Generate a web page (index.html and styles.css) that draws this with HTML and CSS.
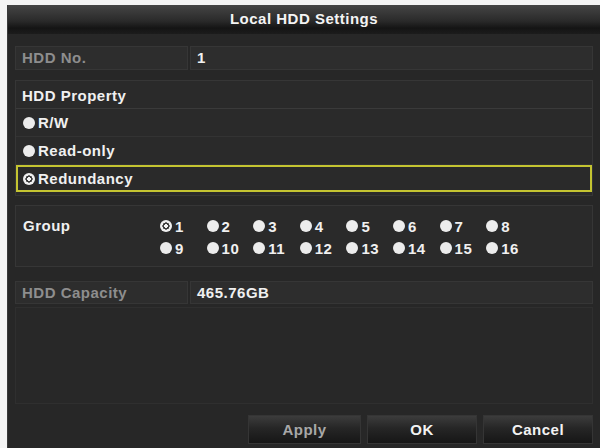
FILE: index.html
```html
<!DOCTYPE html>
<html lang="en">
<head>
	<meta charset="UTF-8">
	<title>Local HDD Settings</title>
	<link rel="stylesheet" href="styles.css">
</head>
<body>
	<div id="dialog">
		<div class="title">Local HDD Settings</div>
		<div class="content">
			<div class="field">
				<div class="label dim">HDD No.</div>
				<div class="value">1</div>
			</div>

			<div class="panel prop">
				<div class="prop-head">HDD Property</div>
				<div class="prop-row"><span class="dot"></span>R/W</div>
				<div class="prop-row"><span class="dot"></span>Read-only</div>
				<div class="prop-row active"><span class="dot on"></span>Redundancy</div>
			</div>

			<div class="panel group">
				<div class="group-label">Group</div>
				<div class="group-list">
					<span class="opt"><span class="dot on"></span>1</span>
					<span class="opt"><span class="dot"></span>2</span>
					<span class="opt"><span class="dot"></span>3</span>
					<span class="opt"><span class="dot"></span>4</span>
					<span class="opt"><span class="dot"></span>5</span>
					<span class="opt"><span class="dot"></span>6</span>
					<span class="opt"><span class="dot"></span>7</span>
					<span class="opt"><span class="dot"></span>8</span>
					<span class="opt"><span class="dot"></span>9</span>
					<span class="opt"><span class="dot"></span>10</span>
					<span class="opt"><span class="dot"></span>11</span>
					<span class="opt"><span class="dot"></span>12</span>
					<span class="opt"><span class="dot"></span>13</span>
					<span class="opt"><span class="dot"></span>14</span>
					<span class="opt"><span class="dot"></span>15</span>
					<span class="opt"><span class="dot"></span>16</span>
				</div>
			</div>

			<div class="field cap">
				<div class="label dim">HDD Capacity</div>
				<div class="value">465.76GB</div>
			</div>

			<div class="panel empty"></div>

			<div class="buttons">
				<div class="btn apply">Apply</div>
				<div class="btn">OK</div>
				<div class="btn">Cancel</div>
			</div>
		</div>
	</div>
</body>
</html>
```

FILE: styles.css
```css
*{
	margin: 0;
	padding: 0;
	box-sizing: border-box;
}
body{
	background: #f4f4f4;
	font-family: "Liberation Sans", Arial, sans-serif;
	font-weight: bold;
	font-size: 15px;
	letter-spacing: 0.5px;
	color: #f0f0f0;
}
#dialog{
	width: 593px;
	height: 443px;
	margin: 5px 0 0 7px;
	background: #272727;
	border-left: 1px solid #3a3a3a;
}
.title{
	height: 29px;
	line-height: 28px;
	text-align: center;
	background: linear-gradient(#454545, #2a2a2a 55%, #141414 80%, #1c1c1c);
	color: #f4f4f4;
}
.content{
	padding: 0 7px 0 7px;
}
.field{
	display: flex;
	gap: 2px;
	height: 24px;
	margin-top: 12px;
}
.field .label, .field .value{
	background: #2d2d2d;
	border: 1px solid #363636;
	line-height: 22px;
	padding-left: 6px;
}
.field .label{
	width: 173px;
}
.field .value{
	flex: 1;
}
.dim{
	color: #8e8e8e;
}
.panel{
	background: #2a2a2a;
	border: 1px solid #363636;
}
.prop{
	margin-top: 10px;
	padding-bottom: 3px;
}
.prop-head{
	height: 28px;
	line-height: 30px;
	padding-left: 6px;
	border-bottom: 1px solid #3a3a3a;
}
.prop-row{
	display: flex;
	align-items: center;
	height: 28px;
	padding-left: 7px;
	border-bottom: 1px solid #333;
}
.prop-row.active{
	height: 27px;
	border: 2px solid #c4c431;
	padding-left: 5px;
}
.dot{
	display: inline-block;
	width: 12px;
	height: 12px;
	border-radius: 50%;
	background: #ececec;
	margin-right: 3px;
	flex-shrink: 0;
}
.dot.on{
	background: radial-gradient(circle, #f4f4f4 0 1.6px, #3a3a3a 2px 3.4px, #f0f0f0 3.8px);
}
.group{
	display: flex;
	margin-top: 9px;
	padding: 9px 0 7px 7px;
}
.group-label{
	width: 137px;
	line-height: 22px;
}
.group-list{
	display: grid;
	grid-template-columns: repeat(8, 46.6px);
	grid-auto-rows: 22px;
}
.opt{
	display: flex;
	align-items: center;
}
.cap{
	margin-top: 14px;
	height: 23px;
}
.cap .label, .cap .value{
	line-height: 21px;
}
.empty{
	height: 97px;
	margin-top: 3px;
	background: #282828;
	border-color: #2f2f2f;
}
.buttons{
	display: flex;
	justify-content: flex-end;
	gap: 6px;
	margin-top: 11px;
}
.btn{
	width: 110px;
	height: 29px;
	line-height: 28px;
	text-align: center;
	background: linear-gradient(#3c3c3c, #262626 45%, #161616);
	border: 1px solid #353535;
	color: #f2f2f2;
}
.btn.apply{
	width: 113px;
	color: #a8a8a8;
}
```
